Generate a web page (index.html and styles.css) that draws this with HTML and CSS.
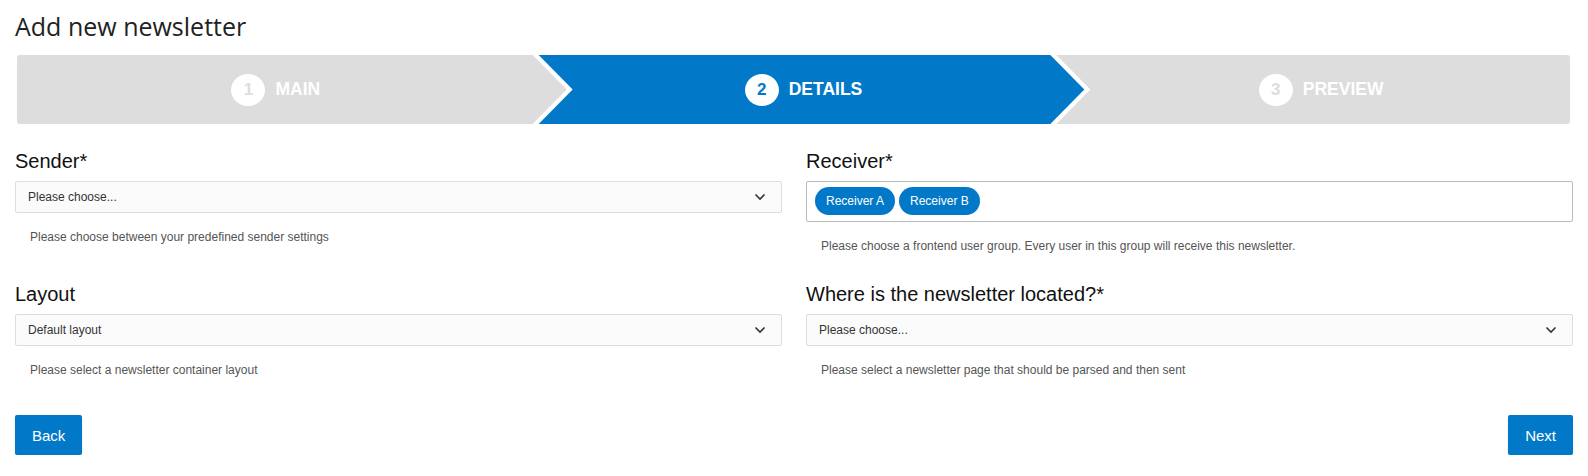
FILE: index.html
```html
<!DOCTYPE html>
<html lang="en">
<head>
<meta charset="UTF-8">
<meta name="viewport" content="width=device-width, initial-scale=1.0">
<title>Add new newsletter</title>
<link rel="stylesheet" href="styles.css">
</head>
<body>
<div class="page">
    <h1 class="title">Add new newsletter</h1>

    <div class="steps">
        <div class="step step-first">
            <span class="step-num">1</span>
            <span class="step-label">MAIN</span>
        </div>
        <div class="step step-active">
            <span class="step-num">2</span>
            <span class="step-label">DETAILS</span>
        </div>
        <div class="step step-last">
            <span class="step-num">3</span>
            <span class="step-label">PREVIEW</span>
        </div>
    </div>

    <div class="form">
        <div class="field">
            <label class="field-label" for="sender">Sender*</label>
            <div class="select-wrap">
                <select id="sender" class="select">
                    <option>Please choose...</option>
                </select>
                <svg class="chevron" width="12" height="8" viewBox="0 0 12 8"><path d="M1.5 1.5 L6 6 L10.5 1.5" fill="none" stroke="#333" stroke-width="1.6"/></svg>
            </div>
            <p class="help">Please choose between your predefined sender settings</p>
        </div>

        <div class="field">
            <label class="field-label">Receiver*</label>
            <div class="tags">
                <span class="tag">Receiver A</span>
                <span class="tag">Receiver B</span>
            </div>
            <p class="help">Please choose a frontend user group. Every user in this group will receive this newsletter.</p>
        </div>

        <div class="field">
            <label class="field-label" for="layout">Layout</label>
            <div class="select-wrap">
                <select id="layout" class="select">
                    <option>Default layout</option>
                </select>
                <svg class="chevron" width="12" height="8" viewBox="0 0 12 8"><path d="M1.5 1.5 L6 6 L10.5 1.5" fill="none" stroke="#333" stroke-width="1.6"/></svg>
            </div>
            <p class="help">Please select a newsletter container layout</p>
        </div>

        <div class="field">
            <label class="field-label" for="page">Where is the newsletter located?*</label>
            <div class="select-wrap">
                <select id="page" class="select">
                    <option>Please choose...</option>
                </select>
                <svg class="chevron" width="12" height="8" viewBox="0 0 12 8"><path d="M1.5 1.5 L6 6 L10.5 1.5" fill="none" stroke="#333" stroke-width="1.6"/></svg>
            </div>
            <p class="help">Please select a newsletter page that should be parsed and then sent</p>
        </div>
    </div>

    <div class="actions">
        <button class="btn">Back</button>
        <button class="btn">Next</button>
    </div>
</div>
</body>
</html>
```

FILE: styles.css
```css
body {
    margin: 0;
    font-family: "Liberation Sans", Arial, sans-serif;
    color: #222;
    background-color: #fff;
}

.page {
    padding: 0 15px;
}

.title {
    margin: 0;
    padding-top: 8px;
    font-family: "Open Sans", sans-serif;
    font-size: 25px;
    font-weight: 400;
    line-height: 36px;
    color: #222;
}

/* wizard steps */
.steps {
    display: grid;
    grid-template-columns: 1fr 1fr 1fr;
    margin: 11px 3px 0 2px;
    height: 69px;
}

.step {
    display: flex;
    align-items: center;
    justify-content: center;
    gap: 10px;
    background-color: #ddd;
    color: #fff;
}

.step-first {
    margin-right: -34px;
    padding-right: 34px;
    border-radius: 3px 0 0 3px;
    clip-path: polygon(0 0, calc(100% - 36px) 0, calc(100% - 2px) 50%, calc(100% - 36px) 100%, 0 100%);
}

.step-active {
    margin-right: -34px;
    padding: 0 34px 0 20px;
    background-color: #0279c8;
    clip-path: polygon(4px 0, calc(100% - 36px) 0, calc(100% - 2px) 50%, calc(100% - 36px) 100%, 4px 100%, 38px 50%);
}

.step-last {
    padding-left: 20px;
    border-radius: 0 3px 3px 0;
    clip-path: polygon(4px 0, 100% 0, 100% 100%, 4px 100%, 38px 50%);
}

.step-num {
    display: flex;
    align-items: center;
    justify-content: center;
    width: 34px;
    height: 32px;
    border-radius: 50%;
    background-color: #fff;
    color: #ddd;
    font-size: 17px;
    font-weight: bold;
}

.step-active .step-num {
    color: #0279c8;
}

.step-label {
    font-size: 17.5px;
    font-weight: bold;
}

/* form */
.form {
    display: grid;
    grid-template-columns: 1fr 1fr;
    column-gap: 24px;
    row-gap: 27px;
    margin-top: 25px;
}

.field-label {
    display: block;
    font-size: 20px;
    line-height: 24px;
    color: #111;
}

.select-wrap {
    position: relative;
    margin-top: 8px;
}

.select {
    display: block;
    width: 100%;
    height: 32px;
    padding: 0 40px 0 12px;
    border: 1px solid #ddd;
    border-radius: 2px;
    background-color: #fbfbfb;
    font-family: "Liberation Sans", Arial, sans-serif;
    font-size: 12px;
    color: #333;
    appearance: none;
    -webkit-appearance: none;
    box-sizing: border-box;
}

.chevron {
    position: absolute;
    right: 16px;
    top: 12px;
    pointer-events: none;
}

.tags {
    display: flex;
    gap: 4px;
    margin-top: 8px;
    padding: 5px 8px 6px;
    border: 1px solid #bbb;
    border-radius: 2px;
}

.tag {
    height: 28px;
    line-height: 28px;
    padding: 0 11px;
    border-radius: 14px;
    background-color: #0279c8;
    color: #fff;
    font-size: 12px;
}

.help {
    margin: 16px 0 0 15px;
    font-size: 12px;
    line-height: 17px;
    color: #555;
}

/* buttons */
.actions {
    display: flex;
    justify-content: space-between;
    margin-top: 36px;
}

.btn {
    height: 40px;
    padding: 0 17px;
    border: none;
    border-radius: 2px;
    background-color: #0279c8;
    color: #fff;
    font-family: "Liberation Sans", Arial, sans-serif;
    font-size: 15px;
    box-shadow: 0 1px 2px rgba(0, 0, 0, 0.15);
    cursor: pointer;
}

.btn:hover {
    background-color: #026bb0;
}
```
